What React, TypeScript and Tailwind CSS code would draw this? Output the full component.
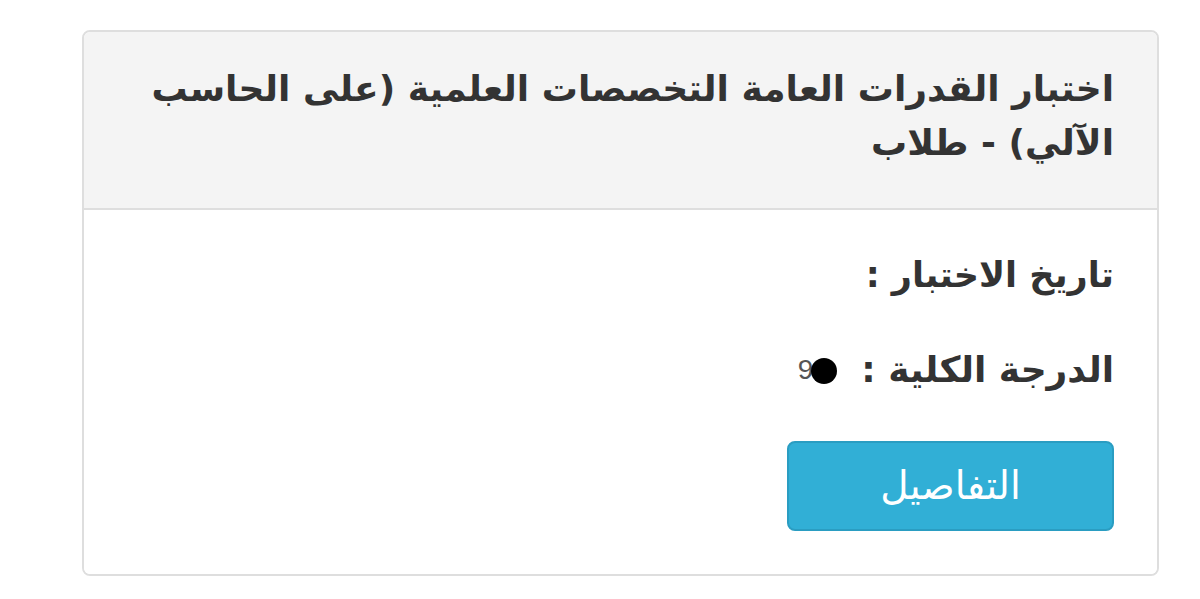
import React from 'react';

const font = { fontFamily: '"DejaVu Sans", "Noto Sans", sans-serif' };

export default function App() {
  return (
    <div className="w-[1200px] h-[599px] bg-white pt-[30px] pl-[82px]" style={font}>
      <div
        dir="rtl"
        className="w-[1077px] h-[546px] border-2 border-[#dedede] rounded-[8px] overflow-hidden flex flex-col"
      >
        <div className="bg-[#f4f4f4] border-b-2 border-[#dedede] h-[178px] pr-[43px] pl-[40px] pt-[30px]">
          <h1 className="text-[36px] leading-[54px] font-bold text-[#333]">
            اختبار القدرات العامة التخصصات العلمية (على الحاسب الآلي) - طلاب
          </h1>
        </div>
        <div className="flex-1 bg-white pr-[43px] pt-[40px]">
          <p className="text-[35px] leading-[50px] font-bold text-[#333]">تاريخ الاختبار :</p>
          <p className="mt-[45px] text-[36px] leading-[50px] font-bold text-[#333] flex items-center">
            <span>الدرجة الكلية :</span>
            <span className="mr-[24px] flex items-center" dir="ltr">
              <span
                className="text-[28px] font-normal text-[#555]"
                style={{ fontFamily: '"Liberation Sans", Arial, sans-serif' }}
              >
                9
              </span>
              <span className="inline-block w-[26px] h-[26px] rounded-full bg-black -ml-[2px] mt-[2px]" />
            </span>
          </p>
          <button className="mt-[46px] w-[327px] h-[90px] rounded-[8px] bg-[#31afd6] border-2 border-[#2a9dc2] text-white text-[39px] font-normal">
            التفاصيل
          </button>
        </div>
      </div>
    </div>
  );
}
